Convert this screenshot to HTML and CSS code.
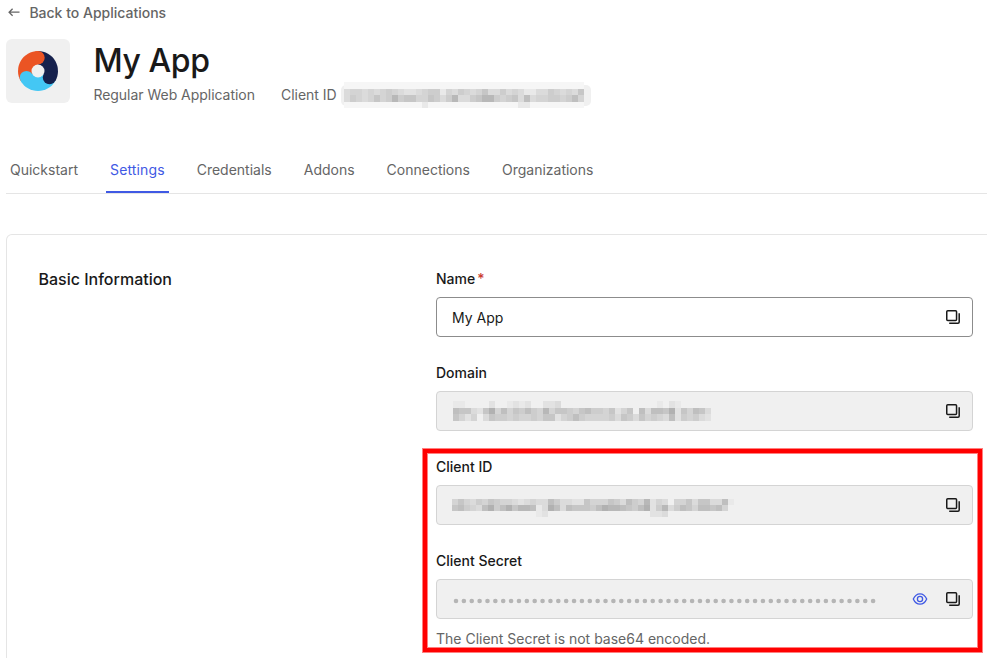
FILE: index.html
```html
<!DOCTYPE html>
<html lang="en">
<head>
<meta charset="utf-8">
<title>My App</title>
<link rel="stylesheet" href="styles.css">
</head>
<body>
<svg class="defs" aria-hidden="true">
  <symbol id="copy" viewBox="0 0 16 16"><rect x="1.75" y="1.75" width="9.8" height="9.8" rx="1" fill="none" stroke="currentColor" stroke-width="1.5"/><path d="M4.2 14.2H13a1.2 1.2 0 0 0 1.2-1.2V4.2" fill="none" stroke="currentColor" stroke-width="1.5"/></symbol>
</svg>
<a class="back"><svg class="arrow" viewBox="0 0 12 12"><path d="M11.5 5.2H1.2M4.6 1.7 1.1 5.2l3.5 3.5" fill="none" stroke="currentColor" stroke-width="1.3"/></svg>Back to Applications</a>
<header class="app">
  <div class="logo"><svg viewBox="0 0 40 40"><path d="M20 0A20 20 0 0 0 2.7 30L20 20Z" fill="#eb5424"/><path d="M20 0A20 20 0 0 1 37.3 30L20 20Z" fill="#16214d"/><path d="M2.7 30A20 20 0 0 0 37.3 30L20 20Z" fill="#44c7f4"/><circle cx="20" cy="6.7" r="6.7" fill="#eb5424"/><circle cx="31.5" cy="26.6" r="6.7" fill="#16214d"/><circle cx="8.5" cy="26.6" r="6.7" fill="#44c7f4"/><circle cx="20" cy="20" r="6.5" fill="#f0f0f0"/></svg></div>
  <div class="heading">
    <h1>My App</h1>
    <div class="meta"><span>Regular Web Application</span><span class="client">Client ID</span><span class="code"><span class="code-haze"><svg class="mosaic" data-heights="6,7,6" data-rows="3443434543223455143543463353431133543436|3543464585664465358335688545637344554574|0000000000000100000000000000011000000000"></svg></span></span></div>
  </div>
</header>
<nav class="tabs"><a>Quickstart</a><a class="active">Settings</a><a>Credentials</a><a>Addons</a><a>Connections</a><a>Organizations</a></nav>
<main class="card">
  <h2>Basic Information</h2>
  <form class="fields">
    <div class="field"><label>Name<span class="required">*</span></label><div class="input editable"><span class="value">My App</span><svg class="icon"><use href="#copy"/></svg></div></div>
    <div class="field"><label>Domain</label><div class="input"><svg class="mosaic domain-mosaic" data-heights="7,6,7" data-rows="1100002001212002230000000000000000102100000|7663269474657548466546755462460737769264763|6424036554544546624575444453653645437254532"></svg><svg class="icon"><use href="#copy"/></svg></div></div>
    <div class="field"><label>Client ID</label><div class="input"><svg class="mosaic id-mosaic" data-heights="6,6,6" data-rows="46435465443234337533226444653754824304463663371|67543795796887139737666579887657925835764776740|00000000000000120000000000000000022300000000000"></svg><svg class="icon"><use href="#copy"/></svg></div></div>
    <div class="field"><label>Client Secret</label><div class="input"><svg class="dots" viewBox="0 0 426 8"><path d="M4 4H421.5" pathLength="53.05"/></svg><svg class="icon eye" viewBox="0 0 16 16"><path d="M1.3 8C2.7 4.8 5.1 2.8 8 2.8S13.3 4.8 14.7 8C13.3 11.2 10.9 13.2 8 13.2S2.7 11.2 1.3 8Z"/><circle cx="8" cy="8" r="2.6"/></svg><svg class="icon"><use href="#copy"/></svg></div><p class="hint">The Client Secret is not base64 encoded.</p></div>
  </form>
</main>
<div class="highlight"></div>
<script src="mosaic.js"></script>
</body>
</html>
```
FILE: styles.css
```css
* { box-sizing: border-box; }
body { margin: 0; padding: 0 0 0 6px; height: 658px; overflow: hidden; position: relative; background: #fff; color: #1e212a; font: 14px/20px Inter, "Liberation Sans", sans-serif; }
.defs { position: absolute; width: 0; height: 0; }
.back { display: flex; align-items: center; gap: 11.4px; height: 20px; margin-top: 3px; padding-left: 2px; color: #656565; font-weight: 500; }
.arrow { width: 12px; height: 12px; margin-right: -2px; }
.app { display: flex; gap: 23.4px; height: 81px; margin-top: 16px; }
.logo { width: 64px; height: 64px; background: #f0f0f0; border-radius: 6px; display: grid; place-items: center; }
.logo svg { width: 40px; height: 40px; }
h1 { margin: 0; font-size: 32px; line-height: 44px; font-weight: 500; letter-spacing: -0.4px; color: #191919; }
.meta { display: flex; align-items: center; height: 24px; color: #656565; letter-spacing: -0.03px; }
.client { margin-left: 26px; }
.code { margin-left: 4.6px; width: 250px; height: 21px; border-radius: 5px; background: #f0f0f0; padding-left: 3px; }
.code-haze { display: block; width: 240px; height: 26px; margin-top: -3px; padding-top: 7px; background: #f6f6f6; }
.mosaic { display: block; flex: none; }
.domain-mosaic { margin-left: 1px; }
.id-mosaic { margin-top: 6px; }
.tabs { display: flex; gap: 24px; height: 44px; margin-top: 30px; border-bottom: 1px solid #e5e5e5; color: #656565; }
.tabs a { height: 43px; padding: 10px 4px 0; }
.tabs .active { color: #3f59e4; border-bottom: 2px solid #3f59e4; letter-spacing: 0.13px; }
.card { display: grid; grid-template-columns: 397px 537px; margin-top: 40px; width: 1020px; height: 424px; border: 1px solid #e5e5e5; border-bottom: 0; border-radius: 6px 6px 0 0; padding: 32px 32px 0; }
h2 { margin: 0 0 0 -0.5px; font-size: 16px; line-height: 24px; font-weight: 500; color: #191919; }
.fields { display: flex; flex-direction: column; gap: 26px; padding-top: 2px; }
.field label { display: block; height: 28px; font-weight: 500; color: #191919; }
.required { color: #ca3b31; margin-left: 2px; }
.input { display: flex; align-items: center; height: 40px; padding: 0 11px 0 15px; border: 1px solid #d4d4d4; border-radius: 4px; background: #f0f0f0; color: #191919; }
.editable { background: #fff; border-color: #8c8c8c; }
.value { padding-top: 2px; }
.icon { width: 16px; height: 16px; margin-left: auto; flex: none; }
.eye { fill: none; stroke: #3f59e4; stroke-width: 1.3; }
.eye + .icon { margin-left: 17px; }
.dots { width: 426px; height: 8px; margin-top: 4px; }
.dots path { fill: none; stroke: #b5b5b5; stroke-width: 4.6; stroke-linecap: round; stroke-dasharray: 0 1; }
.hint { margin: 10px 0 0; color: #656565; }
.highlight { position: absolute; left: 423px; top: 449px; width: 559px; height: 203px; border: 4px solid #f00; box-shadow: 0 0 0 1px rgba(255, 0, 0, 0.5), inset 0 0 0 1px rgba(255, 0, 0, 0.5); }
```
FILE: mosaic.js
```js
// Draws redacted values as a grid of grey cells; each digit is a shade.
document.querySelectorAll('.mosaic').forEach(svg => {
  const rows = svg.dataset.rows.split('|');
  const heights = svg.dataset.heights.split(',').map(Number);
  let top = 0;
  rows.forEach((row, y) => {
    [...row].forEach((d, x) => {
      if (d === '0') return;
      const r = document.createElementNS('http://www.w3.org/2000/svg', 'rect');
      const g = 240 - d * 7;
      r.setAttribute('x', x * 6);
      r.setAttribute('y', top);
      r.setAttribute('width', 6);
      r.setAttribute('height', heights[y]);
      r.setAttribute('shape-rendering', 'crispEdges');
      r.setAttribute('fill', `rgb(${g},${g},${g})`);
      svg.append(r);
    });
    top += heights[y];
  });
  svg.setAttribute('width', rows[0].length * 6);
  svg.setAttribute('height', top);
});
```
